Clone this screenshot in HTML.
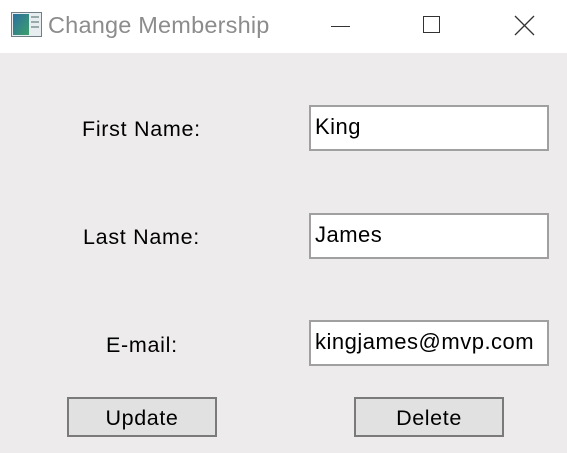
<!DOCTYPE html>
<html><head><style>
body{margin:0;width:567px;height:453px;overflow:hidden;background:#edebeb;font-family:"Liberation Sans",sans-serif;position:relative}
.title{position:absolute;left:0;top:0;width:567px;height:53px;background:#fff}
.t{position:absolute;left:48px;top:12px;font-size:23.5px;color:#8c8c8c;letter-spacing:0.2px}
.a{position:absolute;font-size:21.5px;letter-spacing:0.7px;color:#000;white-space:nowrap}
.in{position:absolute;left:309px;width:236px;height:42px;background:#fff;border:2px solid #a0a0a0}
.in span{position:absolute;left:4px;top:7px;font-size:22px;letter-spacing:0.5px}
.b{position:absolute;top:397px;width:146px;height:36px;background:#e1e1e1;border:2px solid #7a7a7a;text-align:center;line-height:38px;font-size:21.5px;letter-spacing:0.6px}
</style></head><body>
<div class="title">
<svg style="position:absolute;left:11px;top:12px" width="31" height="25"><rect x="0.5" y="0.5" width="30" height="24" fill="#e8eef0" stroke="#6f7f88"/><defs><linearGradient id="g" x1="0" y1="0" x2="1" y2="1"><stop offset="0" stop-color="#2a6fa0"/><stop offset="1" stop-color="#3da06a"/></linearGradient></defs><rect x="2" y="2" width="16" height="21" fill="url(#g)"/><rect x="20" y="4" width="8" height="2" fill="#9aa"/><rect x="20" y="9" width="8" height="2" fill="#9aa"/><rect x="20" y="14" width="8" height="2" fill="#9aa"/></svg>
<div class="t">Change Membership</div>
<div style="position:absolute;left:331px;top:26px;width:19px;height:1px;background:#333"></div>
<div style="position:absolute;left:423px;top:16px;width:17px;height:17px;border:1px solid #333;box-sizing:border-box"></div>
<svg style="position:absolute;left:514px;top:15px" width="21" height="21"><path d="M1 1L20 20M20 1L1 20" stroke="#333" stroke-width="1.3"/></svg>
</div>
<div class="a" style="left:82px;top:117px">First Name:</div>
<div class="a" style="left:83px;top:225px">Last Name:</div>
<div class="a" style="left:106px;top:333px">E-mail:</div>
<div class="in" style="top:105px"><span>King</span></div>
<div class="in" style="top:213px"><span>James</span></div>
<div class="in" style="top:320px"><span>kingjames@mvp.com</span></div>
<div class="b" style="left:67px">Update</div>
<div class="b" style="left:354px">Delete</div>
</body></html>
